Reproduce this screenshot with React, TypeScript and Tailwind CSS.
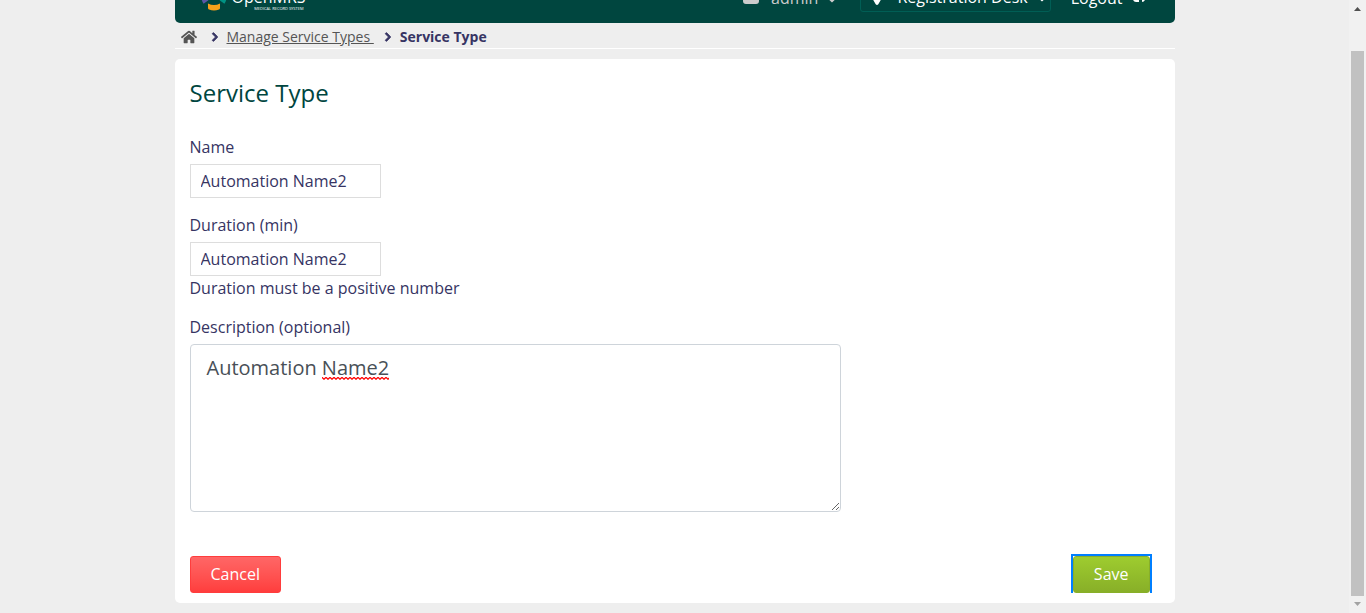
import { useState } from "react";
import { FaHome, FaChevronRight, FaCaretDown, FaSignOutAlt } from "react-icons/fa";

function LogoMark() {
  return (
    <svg width="28" height="28" viewBox="0 0 28 28" fill="none" strokeWidth="6" aria-hidden="true">
      <path d="M8 4.5A11 11 0 0 1 20 4.5" stroke="#ee5a2b" />
      <path d="M4.500 8V14Q4.500 17 6 19" stroke="#5b57a6" />
      <path d="M23.500 8V14Q23.500 17 22 19" stroke="#009384" />
      <path d="M8 20.500Q14 23.500 20 20.500V25Q20 26 19 26.600Q14 28.600 9 26.600Q8 26 8 25Z" fill="#f7a11b" />
    </svg>
  );
}

function UserIcon() {
  return (
    <svg className="h-4 w-4" viewBox="0 0 16 16" fill="currentColor" aria-hidden="true">
      <circle cx="8" cy="4" r="4" />
      <path d="M4 7Q8 10.500 12 7Q16 8 16 13Q16 16 13 16H3Q0 16 0 13Q0 8 4 7Z" />
    </svg>
  );
}

function MarkerIcon() {
  return (
    <svg className="mr-3.5 h-4 w-3" viewBox="0 0 12 16" fill="currentColor" aria-hidden="true">
      <path fillRule="evenodd" d="M6 0A6 6 0 0 1 11.400 8.200L7.300 15.200Q6 16.600 4.700 15.200L.6 8.200A6 6 0 0 1 6 0ZM6 3A3 3 0 1 0 6 9A3 3 0 1 0 6 3Z" />
    </svg>
  );
}

function Header() {
  return (
    <header className="flex h-[23px] items-end justify-between overflow-hidden rounded-b-[5px] bg-[#00463f] pr-[26px] pl-[25px] text-white">
      <a href="#home" className="flex shrink-0 items-end gap-1 pb-3">
        <LogoMark />
        <span className="flex flex-col items-end">
          <span className="text-base leading-[18px]">OpenMRS</span>
          <span className="pr-0.5 text-[4px] leading-[5px]">MEDICAL RECORD SYSTEM</span>
        </span>
      </a>
      <nav className="flex shrink-0 items-end text-base leading-6">
        <button className="mb-[13px] flex items-center text-[#cccccc]">
          <span className="mr-3 pb-1"><UserIcon /></span>
          <span className="mr-2">admin</span>
          <FaCaretDown className="mt-1 h-3 w-3" />
        </button>
        <button className="mb-[11px] ml-[22px] flex items-center rounded-[3px] border border-[#005e55] pr-0.5 pb-0.5 pl-2.5">
          <MarkerIcon />
          <span>Registration Desk</span>
          <FaCaretDown className="mt-1 ml-2 h-3 w-3" />
        </button>
        <a href="#logout" className="mb-[13px] ml-5 flex items-center gap-2.5">
          Logout <FaSignOutAlt className="mb-1 h-4 w-4" />
        </a>
      </nav>
    </header>
  );
}

function Scrollbar() {
  return (
    <div className="flex w-[17px] shrink-0 flex-col items-center bg-[#f1f1f1]" aria-hidden="true">
      <svg className="shrink-0" width="17" height="17" viewBox="0 0 17 17"><path d="M5 11L8.500 7L12 11Z" fill="#505050" /></svg>
      <div className="mt-[34px] w-[13px] flex-1 bg-[#c1c1c1]" />
      <svg className="shrink-0" width="17" height="17" viewBox="0 0 17 17"><path d="M5 6L8.500 10L12 6Z" fill="#a3a3a3" /></svg>
    </div>
  );
}

const inputClass = "mt-[5px] block h-[34px] w-[191px] border border-[#dddddd] bg-white px-2.5 text-base text-[#363463] outline-none";

export default function App() {
  const [name, setName] = useState("Automation Name2");
  const [duration, setDuration] = useState("Automation Name2");
  const [description, setDescription] = useState("Automation Name2");

  return (
    <div className="flex h-screen bg-[#eeeeee] font-['Open_Sans',sans-serif] text-[#363463]">
      <div className="min-w-0 flex-1 overflow-hidden">
        <div className="mx-auto max-w-[1000px]">
          <Header />
          <nav aria-label="Breadcrumb" className="flex h-[26px] items-center border-b border-white px-1.5 pt-[3px] text-sm">
            <a href="#home" aria-label="Home" className="text-[#555555]"><FaHome className="h-4 w-4" /></a>
            <FaChevronRight className="mr-2 ml-3.5 h-2.5 w-2" strokeWidth="50" stroke="currentColor" />
            <a href="#types" className="mr-0.5 whitespace-pre text-[#555555] underline">{"Manage Service Types "}</a>
            <FaChevronRight className="mx-2 h-2.5 w-2" strokeWidth="50" stroke="currentColor" />
            <span className="font-bold">Service Type</span>
          </nav>
          <main className="mt-2.5 rounded-[5px] bg-white px-[15px] pt-4 pb-2.5">
            <h1 className="text-2xl leading-9 text-[#00463f]">Service Type</h1>
            <form onSubmit={(e) => e.preventDefault()}>
              <div className="mt-6">
                <label htmlFor="name" className="block leading-6">Name</label>
                <input id="name" className={inputClass} value={name} onChange={(e) => setName(e.target.value)} />
              </div>
              <div className="mt-[15px]">
                <label htmlFor="duration" className="block leading-6">Duration (min)</label>
                <input id="duration" className={inputClass} value={duration} onChange={(e) => setDuration(e.target.value)} />
                <p className="leading-6">Duration must be a positive number</p>
              </div>
              <div className="mt-[15px]">
                <label htmlFor="description" className="block leading-6">Description (optional)</label>
                <div className="relative mt-[5px] max-w-[651px]">
                  <textarea
                    id="description"
                    spellCheck={false}
                    className="block h-[168px] w-full resize rounded border border-[#ced4da] bg-white px-4 py-2 text-xl leading-[30px] text-[#495057] outline-none"
                    value={description}
                    onChange={(e) => setDescription(e.target.value)}
                  />
                  {description === "Automation Name2" && (
                    <svg className="pointer-events-none absolute top-[33px] left-[132px]" width="67" height="3" aria-hidden="true">
                      <defs>
                        <pattern id="wave" width="4" height="3" patternUnits="userSpaceOnUse">
                          <path d="M-1 -.5L2 2.200L5 -.5" stroke="#ff0000" strokeWidth="1.300" fill="none" />
                        </pattern>
                      </defs>
                      <rect width="67" height="3" fill="url(#wave)" />
                    </svg>
                  )}
                </div>
              </div>
              <div className="mt-[42px] flex items-end justify-between pr-2">
                <button type="button" className="h-[37px] rounded-[3px] border border-[#ff3d3d] bg-linear-to-b from-[#ff6666] to-[#ff3d3d] px-5 pb-0.5 text-white">Cancel</button>
                <div className="border-2 border-b-0 border-[#007fff]">
                  <button type="submit" className="block h-[37px] rounded-[3px] border border-[#88af28] bg-linear-to-b from-[#9ecc2f] to-[#88af28] px-5 pb-0.5 text-white outline-none">Save</button>
                </div>
              </div>
            </form>
          </main>
        </div>
      </div>
      <Scrollbar />
    </div>
  );
}
